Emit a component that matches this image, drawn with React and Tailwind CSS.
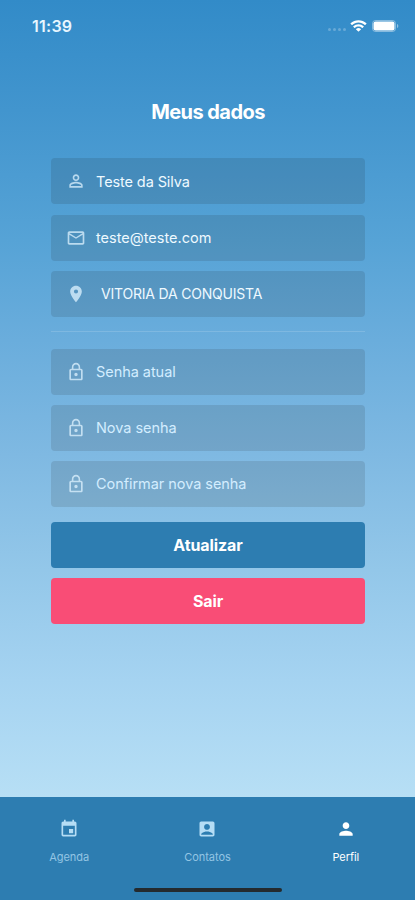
import {
  MdAccountBox,
  MdEvent,
  MdLocationOn,
  MdLockOutline,
  MdMailOutline,
  MdPerson,
  MdPersonOutline,
} from 'react-icons/md'

const PASSWORD_FIELDS = ['Senha atual', 'Nova senha', 'Confirmar nova senha']

const TABS = [
  { label: 'Agenda', icon: MdEvent },
  { label: 'Contatos', icon: MdAccountBox },
  { label: 'Perfil', icon: MdPerson, active: true },
]

function StatusBar() {
  return (
    <div className="flex h-[52px] items-center justify-between pl-[32px] pr-[16px]">
      <span className="text-[16px] font-semibold tracking-[0.25px] text-[#e8f6ff]">11:39</span>
      <div className="flex items-center">
        <div className="mr-[4px] mt-[6px] flex gap-[2px]">
          {[0, 1, 2, 3].map((dot) => (
            <span key={dot} className="size-[3px] rounded-full bg-white/25" />
          ))}
        </div>
        <svg className="mr-[5px] h-[12px] w-[17px]" viewBox="0.5 0 16 11.5" fill="white">
          <path d="M8.5 2.4c2.3 0 4.4.9 6 2.4.1.1.3.1.4 0l1.2-1.2c.1-.1.1-.3 0-.4A11 11 0 0 0 .9 3.2c-.1.1-.1.3 0 .4l1.2 1.2c.1.1.3.1.4 0 1.6-1.5 3.7-2.4 6-2.4z" />
          <path d="M8.5 6.3c1.3 0 2.5.5 3.4 1.3.1.1.3.1.4 0l1.2-1.2c.1-.1.1-.3 0-.4a7.3 7.3 0 0 0-10 0c-.1.1-.1.3 0 .4l1.2 1.2c.1.1.3.1.4 0 .9-.8 2.1-1.3 3.4-1.3z" />
          <path d="M10.8 9c.1-.1.1-.3 0-.4a3.6 3.6 0 0 0-4.6 0c-.1.1-.1.3 0 .4l2.1 2.1c.1.1.3.1.4 0z" />
        </svg>
        <svg className="h-[12px] w-[27px]" viewBox="0 0 27 12">
          <rect x="0.5" y="0.5" width="23" height="11" rx="3" fill="none" stroke="white" strokeOpacity="0.4" />
          <rect x="1.5" y="1.5" width="21" height="9" rx="2" fill="white" />
          <path d="M25 4v4c.8-.3 1.3-1.1 1.3-2S25.8 4.3 25 4z" fill="white" fillOpacity="0.45" />
        </svg>
      </div>
    </div>
  )
}

function Field({ icon: Icon, children, className = 'text-[14.5px]' }) {
  return (
    <div className="flex h-[46px] items-center rounded-[4px] bg-[#140800]/11 pl-[15px]">
      <Icon className="mr-[10px] size-[20px] shrink-0 text-[#dff3ff]/75" />
      <span className={`whitespace-nowrap ${className}`}>{children}</span>
    </div>
  )
}

function TabBar() {
  return (
    <nav className="relative grid h-[103px] grid-cols-3 bg-[#2d7db1]">
      {TABS.map(({ label, icon: Icon, active }) => (
        <div
          key={label}
          className={`flex flex-col items-center pt-[22px] ${active ? 'text-white' : 'text-[#b5ddf5]'}`}
        >
          <Icon className="size-[20px]" />
          <span className={`mt-[10px] text-[11px] leading-[16px] tracking-[-0.05px] ${active ? '' : 'opacity-75'}`}>
            {label}
          </span>
        </div>
      ))}
      <div className="absolute bottom-[8px] left-1/2 h-[4px] w-[148px] -translate-x-1/2 rounded-full bg-[#242a2e]" />
    </nav>
  )
}

export default function App() {
  return (
    <div className="flex h-[900px] w-full flex-col bg-[linear-gradient(180deg,#328bc8_0px,#4295ce_110px,#56a3d6_240px,#6aaddc_340px,#7fb9e2_455px,#93c7e9_570px,#a5d3f1_680px,#b7dff5_797px)] font-['Inter','Liberation_Sans',sans-serif]">
      <StatusBar />
      <main className="flex flex-1 flex-col pl-[51px] pr-[50px] pt-[45px]">
        <h1 className="text-center text-[20px] font-bold leading-[30px] tracking-[-0.55px] text-white">Meus dados</h1>

        <div className="mt-[31.4px] flex flex-col gap-[10.25px] text-[#eef9ff]">
          <Field icon={MdPersonOutline} className="text-[14.5px] tracking-[-0.1px]">Teste da Silva</Field>
          <Field icon={MdMailOutline}>teste@teste.com</Field>
          <Field icon={MdLocationOn} className="pl-[5px] text-[14px] tracking-[-0.2px]">VITORIA DA CONQUISTA</Field>
        </div>

        <div className="mt-[14px] mb-[16.8px] h-px shrink-0 bg-white/15" />

        <div className="flex flex-col gap-[10.25px] text-[#d3edff]">
          {PASSWORD_FIELDS.map((label) => (
            <Field key={label} icon={MdLockOutline} className="text-[14.5px] tracking-[-0.05px]">
              {label}
            </Field>
          ))}
        </div>

        <div className="mt-[14.7px] flex flex-col gap-[10.25px] text-[16px] font-bold tracking-[-0.1px] text-white">
          <button className="h-[46px] rounded-[4px] bg-[#2d7db1]">Atualizar</button>
          <button className="h-[46px] rounded-[4px] bg-[#f94d76]">Sair</button>
        </div>
      </main>
      <TabBar />
    </div>
  )
}
